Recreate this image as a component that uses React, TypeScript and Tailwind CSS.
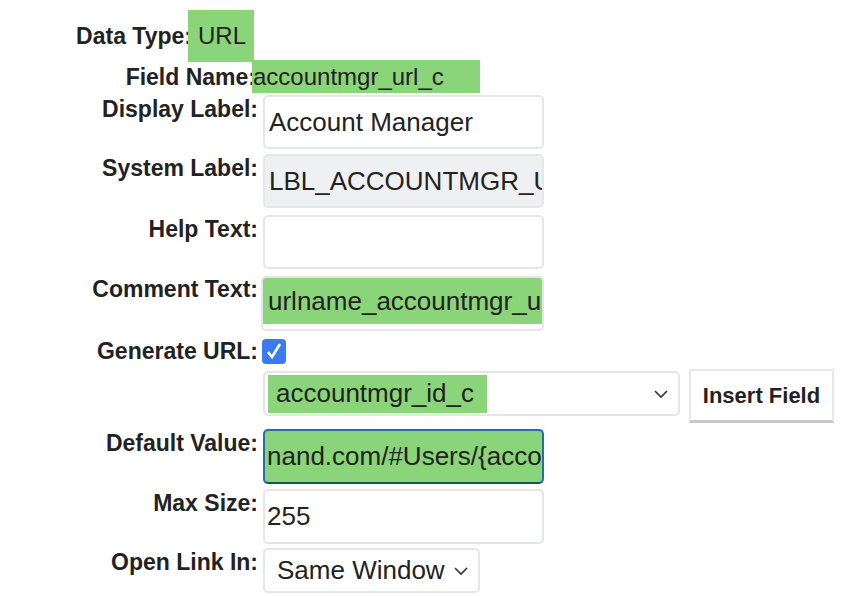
import React from "react";

const Label = ({ children, w = "w-[258px]", pt = "pt-0" }: { children: React.ReactNode; w?: string; pt?: string }) => (
  <div className={`${w} ${pt} shrink-0 text-right font-bold text-[23px] text-[#222] leading-[26px] whitespace-nowrap`}>{children}</div>
);

const Chev = () => (
  <svg width="16" height="10" viewBox="0 0 16 10" className="shrink-0"><path d="M2 2 L8 8 L14 2" fill="none" stroke="#333" strokeWidth="1.6" /></svg>
);

export default function App() {
  return (
    <div className="w-[846px] h-[596px] bg-white overflow-hidden text-[#222]" style={{ fontFamily: '"Liberation Sans", Arial, sans-serif' }}>
      <div className="flex h-[52px] mt-[10px] items-center">
        <Label w="w-[192px]">Data Type:</Label>
        <div className="ml-[-4px] h-[52px] w-[66px] bg-[#8ad47a] flex items-center pl-[10px] text-[24px]">URL</div>
      </div>
      <div className="flex h-[33px] -mt-[2px] items-center">
        <Label w="w-[256px]">Field Name:</Label>
        <div className="ml-[-4px] h-[33px] w-[228px] bg-[#8ad47a] flex items-center pl-[1px] text-[24px]">accountmgr_url_c</div>
      </div>
      <div className="flex mt-[2px]">
        <Label pt="pt-[1px]">Display Label:</Label>
        <div className="ml-[5px] w-[281px] h-[54px] border-2 border-[#e4e6ea] rounded-[5px] flex items-center pl-[4px] text-[26px] whitespace-nowrap overflow-hidden">Account Manager</div>
      </div>
      <div className="flex mt-[5px]">
        <Label pt="pt-[1px]">System Label:</Label>
        <div className="ml-[5px] w-[281px] h-[54px] border-2 border-[#e4e6ea] bg-[#eff0f2] rounded-[5px] flex items-center pl-[4px] text-[26px] overflow-hidden whitespace-nowrap">LBL_ACCOUNTMGR_U</div>
      </div>
      <div className="flex mt-[7px]">
        <Label pt="pt-[1px]">Help Text:</Label>
        <div className="ml-[5px] w-[281px] h-[54px] border-2 border-[#e4e6ea] rounded-[5px]" />
      </div>
      <div className="flex mt-[7px]">
        <Label pt="pt-[0px]">Comment Text:</Label>
        <div className="ml-[3px] w-[283px] h-[55px] border-2 border-[#e4e6ea] rounded-[5px] overflow-hidden">
          <div className="h-[46px] bg-[#8ad47a] flex items-center pl-[5px] text-[26px] whitespace-nowrap overflow-hidden">urlname_accountmgr_u</div>
        </div>
      </div>
      <div className="flex mt-[7px] items-center">
        <Label>Generate URL:</Label>
        <div className="ml-[4px] w-[24px] h-[25px] rounded-[4px] bg-[#3b7bf2] flex items-center justify-center">
          <svg width="16" height="18" viewBox="0 0 16 18"><path d="M2 10 L6 15 L14 2" fill="none" stroke="white" strokeWidth="2.6" /></svg>
        </div>
      </div>
      <div className="flex mt-[5px] items-start">
        <div className="w-[263px] shrink-0" />
        <div className="mt-[2px] w-[417px] h-[45px] border-2 border-[#e4e6ea] rounded-[5px] flex items-center pl-[3px] pr-[9px]">
          <div className="h-[38px] w-[219px] bg-[#8ad47a] flex items-center pl-[8px] text-[26px] whitespace-nowrap">accountmgr_id_c</div>
          <div className="flex-1" />
          <Chev />
        </div>
        <div className="ml-[9px] w-[145px] h-[54px] border-2 border-[#e8e8e8] border-b-[3px] border-b-[#c8c8c8] flex items-center justify-center font-bold text-[22px] whitespace-nowrap">Insert Field</div>
      </div>
      <div className="flex mt-[6px]">
        <Label pt="pt-[1px]">Default Value:</Label>
        <div className="ml-[5px] w-[281px] h-[55px] border-2 border-[#1f6fb5] border-b-[#0f5a5a] rounded-[5px] bg-[#8ad47a] flex items-center pl-[2px] text-[26px] whitespace-nowrap overflow-hidden">nand.com/#Users/{"{"}acco</div>
      </div>
      <div className="flex mt-[5px]">
        <Label pt="pt-[1px]">Max Size:</Label>
        <div className="ml-[5px] w-[281px] h-[55px] border-2 border-[#e4e6ea] rounded-[5px] flex items-center pl-[2px] text-[26px]">255</div>
      </div>
      <div className="flex mt-[4px]">
        <Label pt="pt-[1px]">Open Link In:</Label>
        <div className="ml-[5px] w-[217px] h-[45px] border-2 border-[#e4e6ea] rounded-[5px] flex items-center pl-[12px] pr-[9px] text-[26px] whitespace-nowrap">
          <span className="flex-1">Same Window</span>
          <Chev />
        </div>
      </div>
    </div>
  );
}
